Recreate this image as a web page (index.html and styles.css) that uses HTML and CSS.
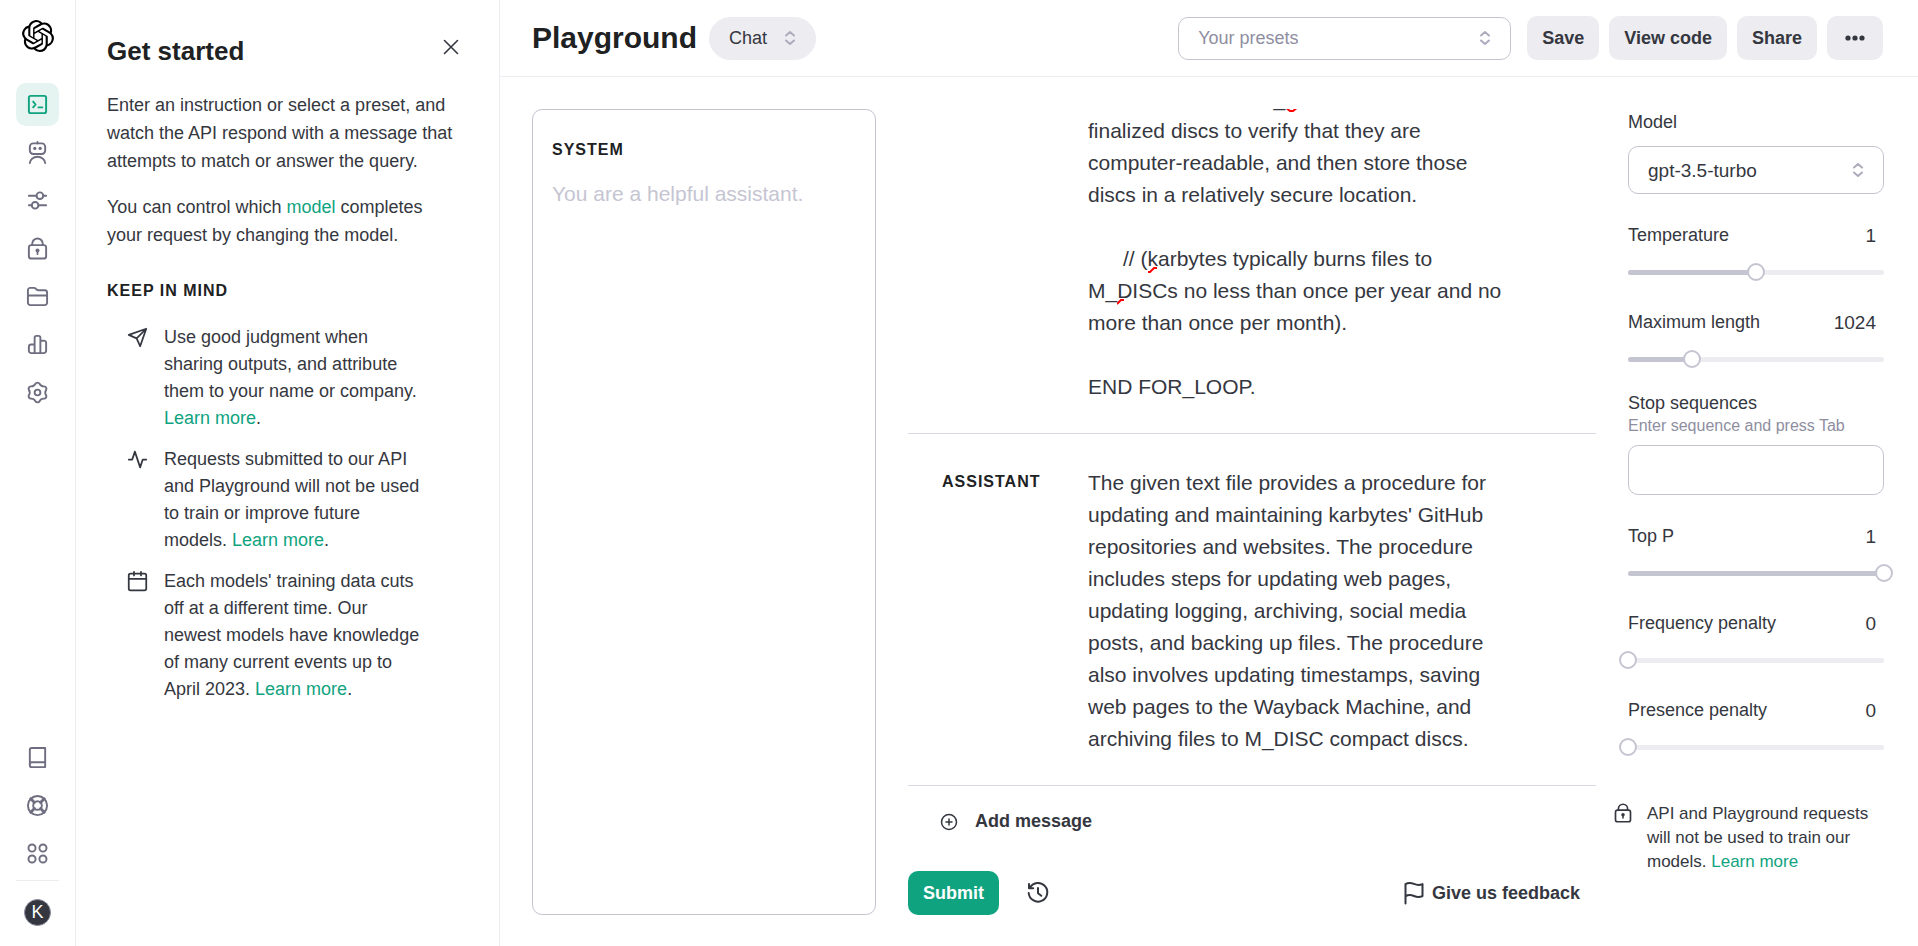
FILE: index.html
```html
<!DOCTYPE html>
<html lang="en">
<head>
<meta charset="utf-8">
<meta name="viewport" content="width=device-width, initial-scale=1">
<title>Playground</title>
<link rel="stylesheet" href="styles.css">
</head>
<body>
<svg class="defs" aria-hidden="true">
  <symbol id="chevrons" viewBox="0 0 12 16">
    <path d="M2 5.500 6 2l4 3.500M2 10.500 6 14l4-3.500" fill="none" stroke="#acacbe" stroke-width="2" stroke-linecap="round" stroke-linejoin="round"/>
  </symbol>
  <symbol id="lock" viewBox="0 0 24 24">
    <g fill="none" stroke="currentColor" stroke-width="2"><rect x="3" y="8.500" width="18" height="14" rx="2.500"/><path d="M6.500 8.500V7a5.500 5.500 0 0 1 11 0v1.500"/></g>
    <circle cx="12" cy="14" r="2.100" fill="currentColor" stroke="none"/><path d="M12 14v4" stroke="currentColor" stroke-width="1.800" stroke-linecap="round"/>
  </symbol>
</svg>
<div class="app">
  <nav class="rail" aria-label="Main">
    <a class="logo" href="#" aria-label="Home">
      <svg width="32" height="32" viewBox="0 0 24 24"><path d="M22.2819 9.8211a5.9847 5.9847 0 0 0-.5157-4.9108 6.0462 6.0462 0 0 0-6.5098-2.9A6.0651 6.0651 0 0 0 4.9807 4.1818a5.9847 5.9847 0 0 0-3.9977 2.9 6.0462 6.0462 0 0 0 .7427 7.0966 5.98 5.98 0 0 0 .511 4.9107 6.051 6.051 0 0 0 6.5146 2.9001A5.9847 5.9847 0 0 0 13.2599 24a6.0557 6.0557 0 0 0 5.7718-4.2058 5.9894 5.9894 0 0 0 3.9977-2.9001 6.0557 6.0557 0 0 0-.7475-7.0729zm-9.022 12.6081a4.4755 4.4755 0 0 1-2.8764-1.0408l.1419-.0804 4.7783-2.7582a.7948.7948 0 0 0 .3927-.6813v-6.7369l2.02 1.1686a.071.071 0 0 1 .038.052v5.5826a4.504 4.504 0 0 1-4.4945 4.4944zm-9.6607-4.1254a4.4708 4.4708 0 0 1-.5346-3.0137l.142.0852 4.783 2.7582a.7712.7712 0 0 0 .7806 0l5.8428-3.3685v2.3324a.0804.0804 0 0 1-.0332.0615L9.74 19.9502a4.4992 4.4992 0 0 1-6.1408-1.6464zM2.3408 7.8956a4.485 4.485 0 0 1 2.3655-1.9728V11.6a.7664.7664 0 0 0 .3879.6765l5.8144 3.3543-2.0201 1.1685a.0757.0757 0 0 1-.071 0l-4.8303-2.7865A4.504 4.504 0 0 1 2.3408 7.872zm16.5963 3.8558L13.1038 8.364 15.1192 7.2a.0757.0757 0 0 1 .071 0l4.8303 2.7913a4.4944 4.4944 0 0 1-.6765 8.1042v-5.6772a.79.79 0 0 0-.407-.667zm2.0107-3.0231l-.142-.0852-4.7735-2.7818a.7759.7759 0 0 0-.7854 0L9.409 9.2297V6.8974a.0662.0662 0 0 1 .0284-.0615l4.8303-2.7866a4.4992 4.4992 0 0 1 6.6802 4.66zM8.3065 12.863l-2.02-1.1638a.0804.0804 0 0 1-.038-.0567V6.0742a4.4992 4.4992 0 0 1 7.3757-3.4537l-.142.0805L8.704 5.459a.7948.7948 0 0 0-.3927.6813zm1.0976-2.3654l2.602-1.4998 2.6069 1.4998v2.9994l-2.5974 1.4997-2.6067-1.4997Z"/></svg>
    </a>
    <div class="rail-group">
      <a class="rail-item active" href="#" aria-label="Playground"><svg viewBox="0 0 24 24"><rect x="3" y="3" width="18" height="18" rx="2"/><path d="m7.500 9 2.500 3-2.500 3M13 15h4"/></svg></a>
      <a class="rail-item" href="#" aria-label="Assistants"><svg viewBox="0 0 24 24"><rect x="4" y="2.500" width="16" height="11" rx="3.500"/><path d="M12 1v1.500M4 23a8 6.500 0 0 1 16 0"/><g class="solid"><circle cx="9.200" cy="7.800" r="1.700"/><circle cx="14.800" cy="7.800" r="1.700"/></g></svg></a>
      <a class="rail-item" href="#" aria-label="Fine-tuning"><svg viewBox="0 0 24 24"><path d="M3 7h8M18 7h3M3 17h3M13 17h8"/><circle cx="14.500" cy="7" r="3.500"/><circle cx="9.500" cy="17" r="3.500"/></svg></a>
      <a class="rail-item" href="#" aria-label="API keys"><svg viewBox="0 0 24 24"><use href="#lock"/></svg></a>
      <a class="rail-item" href="#" aria-label="Files"><svg viewBox="0 0 24 24"><path d="M2 18.500v-13A2.500 2.500 0 0 1 4.500 3h3.700c1 0 1.600.4 2.200 1.100.6.800 1.200 1.400 2.300 1.400h6.800A2.500 2.500 0 0 1 22 8v10.500a2.500 2.500 0 0 1-2.500 2.500h-15A2.500 2.500 0 0 1 2 18.500zM2 11h20"/></svg></a>
      <a class="rail-item" href="#" aria-label="Usage"><svg viewBox="0 0 24 24"><path d="M9 21V5a2 2 0 0 1 2-2h2a2 2 0 0 1 2 2v16M9 12H5.500A2.500 2.500 0 0 0 3 14.500v4A2.500 2.500 0 0 0 5.500 21h13a2.500 2.500 0 0 0 2.500-2.500v-9A2.500 2.500 0 0 0 18.500 8H15"/></svg></a>
      <a class="rail-item" href="#" aria-label="Settings"><svg viewBox="0 0 24 24"><path d="M9.900 2.900A2.400 2.400 0 0 1 14.100 2.900Q15.600 5.800 18.830 5.630A2.400 2.400 0 0 1 20.930 9.270Q19.200 12 20.930 14.730A2.400 2.400 0 0 1 18.830 18.370Q15.600 18.200 14.100 21.100A2.400 2.400 0 0 1 9.900 21.100Q8.400 18.200 5.170 18.370A2.400 2.400 0 0 1 3.070 14.730Q4.800 12 3.070 9.270A2.400 2.400 0 0 1 5.170 5.630Q8.400 5.800 9.900 2.900z"/><circle cx="12" cy="12" r="3"/></svg></a>
    </div>
    <div class="rail-group rail-bottom">
      <a class="rail-item" href="#" aria-label="Documentation"><svg viewBox="0 0 24 24"><path d="M20 17H6a2 2 0 0 0-2 2V4a2 2 0 0 1 2-2h14v20H6a2 2 0 0 1-2-2v-1"/></svg></a>
      <a class="rail-item" href="#" aria-label="Help"><svg viewBox="0 0 24 24"><circle cx="12" cy="12" r="10"/><circle cx="12" cy="12" r="4.500"/><path d="m5 5 3.800 3.800M19 5l-3.800 3.800M5 19l3.800-3.800M19 19l-3.800-3.800" stroke-width="3"/></svg></a>
      <a class="rail-item" href="#" aria-label="All products"><svg viewBox="0 0 24 24"><circle cx="6.300" cy="6.300" r="3.700"/><circle cx="17.700" cy="6.300" r="3.700"/><circle cx="6.300" cy="17.700" r="3.700"/><circle cx="17.700" cy="17.700" r="3.700"/></svg></a>
    </div>
    <div class="account"><button class="avatar" type="button" aria-label="Account">K</button></div>
  </nav>

  <aside class="intro">
    <div class="intro-head">
      <h2>Get started</h2>
      <button class="close" type="button" aria-label="Close"><svg width="16" height="16" viewBox="0 0 16 16"><path d="m1.500 1.500 13 13m0-13-13 13" stroke="currentColor" stroke-width="1.600" stroke-linecap="round"/></svg></button>
    </div>
    <p>Enter an instruction or select a preset, and watch the API respond with a message that attempts to match or answer the query.</p>
    <p>You can control which <a href="#">model</a> completes your request by changing the model.</p>
    <h3 class="caps">KEEP IN MIND</h3>
    <ul class="tips">
      <li><svg viewBox="0 0 24 24"><path d="M22 2 2 9l9 4 4 9zM22 2 11 13"/></svg><span>Use good judgment when sharing outputs, and attribute them to your name or company. <a href="#">Learn more</a>.</span></li>
      <li><svg viewBox="0 0 24 24"><path d="M22 12h-4l-3 9L9 3l-3 9H2"/></svg><span>Requests submitted to our API and Playground will not be used to train or improve future models. <a href="#">Learn more</a>.</span></li>
      <li><svg viewBox="0 0 24 24"><rect x="2" y="3" width="20" height="19" rx="2"/><path d="M8 1v4M16 1v4M2 9h20"/></svg><span>Each models' training data cuts off at a different time. Our newest models have knowledge of many current events up to April 2023. <a href="#">Learn more</a>.</span></li>
    </ul>
  </aside>

  <main class="main">
    <header class="topbar">
      <h1>Playground</h1>
      <div class="select-box mode">
        <select aria-label="Mode"><option>Chat</option></select>
        <svg width="12" height="16"><use href="#chevrons"/></svg>
      </div>
      <div class="actions">
        <div class="select-box presets">
          <select aria-label="Presets"><option>Your presets</option></select>
          <svg width="12" height="16"><use href="#chevrons"/></svg>
        </div>
        <button class="btn" type="button">Save</button>
        <button class="btn" type="button">View code</button>
        <button class="btn" type="button">Share</button>
        <button class="btn more" type="button" aria-label="More"><svg width="20" height="8" viewBox="0 0 20 8" fill="currentColor"><circle cx="3" cy="4" r="2.600"/><circle cx="10" cy="4" r="2.600"/><circle cx="17" cy="4" r="2.600"/></svg></button>
      </div>
    </header>

    <div class="workspace">
      <section class="system">
        <label class="caps" for="system">SYSTEM</label>
        <textarea id="system" placeholder="You are a helpful assistant."></textarea>
      </section>

      <section class="chat">
        <div class="thread">
          <article class="message">
            <div class="role caps"></div>
            <div class="text">Insert each of the M_<span class="flag">D<svg width="14" height="6"><path d="m0 0 5 4h3l5-4"/></svg></span>ISCs,
finalized discs to verify that they are
computer-readable, and then store those
discs in a relatively secure location.

      // (<span class="flag">k<svg width="9" height="6"><path d="M0 5h2l4-4h3"/></svg></span>arbytes typically burns files to
M_<span class="flag">D<svg width="7" height="6"><path d="m0 5 4-4h3"/></svg></span>ISCs no less than once per year and no
more than once per month).

END FOR_LOOP.</div>
          </article>
          <article class="message">
            <div class="role caps">ASSISTANT</div>
            <div class="text">The given text file provides a procedure for
updating and maintaining karbytes' GitHub
repositories and websites. The procedure
includes steps for updating web pages,
updating logging, archiving, social media
posts, and backing up files. The procedure
also involves updating timestamps, saving
web pages to the Wayback Machine, and
archiving files to M_DISC compact discs.</div>
          </article>
          <button class="add" type="button"><svg width="18" height="18" viewBox="0 0 18 18"><circle cx="9" cy="9" r="7.500"/><path d="M9 6v6M6 9h6"/></svg>Add message</button>
        </div>
        <footer class="chat-foot">
          <button class="btn submit" type="button">Submit</button>
          <button class="plain history" type="button" aria-label="History"><svg width="24" height="24" viewBox="0 0 24 24"><path d="M4 6.500A9.300 9.300 0 1 1 2.700 12M3 3v4.200h4.200M12 7v5.300l3.300 2.500"/></svg></button>
          <button class="plain feedback" type="button"><svg width="20" height="24" viewBox="0 0 20 24"><path d="M1.500 22.500V3.200c3-2 6-1.400 8.500-.3 2.900 1.300 6 1.300 8.500.2v12c-2.500 1.200-5.600 1.200-8.500-.1-2.500-1-5.500-1.600-8.500.3"/></svg>Give us feedback</button>
        </footer>
      </section>

      <aside class="params">
        <label for="model">Model</label>
        <div class="select-box model">
          <select id="model"><option>gpt-3.5-turbo</option></select>
          <svg width="12" height="16"><use href="#chevrons"/></svg>
        </div>
        <div class="param">
          <div class="param-head"><label for="temp">Temperature</label><input type="text" value="1" aria-label="Temperature value"></div>
          <div class="slider"><div class="track"><div class="fill" style="width:50%"></div></div><input id="temp" type="range" min="0" max="2" step="0.01" value="1"></div>
        </div>
        <div class="param">
          <div class="param-head"><label for="len">Maximum length</label><input type="text" value="1024" aria-label="Maximum length value"></div>
          <div class="slider"><div class="track"><div class="fill" style="width:25%"></div></div><input id="len" type="range" min="0" max="4096" value="1024"></div>
        </div>
        <div class="stop">
          <label for="stop">Stop sequences</label>
          <span class="hint">Enter sequence and press Tab</span>
          <input id="stop" type="text">
        </div>
        <div class="param">
          <div class="param-head"><label for="topp">Top P</label><input type="text" value="1" aria-label="Top P value"></div>
          <div class="slider"><div class="track"><div class="fill" style="width:100%"></div></div><input id="topp" type="range" min="0" max="1" step="0.01" value="1"></div>
        </div>
        <div class="param">
          <div class="param-head"><label for="freq">Frequency penalty</label><input type="text" value="0" aria-label="Frequency penalty value"></div>
          <div class="slider"><div class="track"><div class="fill" style="width:0%"></div></div><input id="freq" type="range" min="0" max="2" step="0.01" value="0"></div>
        </div>
        <div class="param">
          <div class="param-head"><label for="pres">Presence penalty</label><input type="text" value="0" aria-label="Presence penalty value"></div>
          <div class="slider"><div class="track"><div class="fill" style="width:0%"></div></div><input id="pres" type="range" min="0" max="2" step="0.01" value="0"></div>
        </div>
        <div class="notice">
          <svg width="20" height="20" viewBox="0 0 24 24"><use href="#lock"/></svg>
          <p>API and Playground requests will not be used to train our models. <a href="#">Learn more</a></p>
        </div>
      </aside>
    </div>
  </main>
</div>
</body>
</html>
```
FILE: styles.css
```css
:root {
  --text: #353740;
  --strong: #202123;
  --muted: #6e6e80;
  --line: #ececf1;
  --border: #c5c5d2;
  --green: #10a37f;
}

* { box-sizing: border-box; }

body {
  margin: 0;
  color: var(--text);
  background: #fff;
  font: 18px/27px "Liberation Sans", Arial, sans-serif;
}

h1, h2, h3, p, ul { margin: 0; padding: 0; }
h1, h2, h3 { color: var(--strong); }
a { color: var(--green); text-decoration: none; }
button, input, select, textarea { font: inherit; color: inherit; margin: 0; }
button { border: 0; padding: 0; background: none; cursor: pointer; }
svg { display: block; flex: none; }
.defs { display: none; }

.caps {
  color: var(--strong);
  font-size: 16px;
  font-weight: 700;
  letter-spacing: 1px;
}

.app { display: flex; height: 100vh; }

/* Icon rail */
.rail {
  display: flex;
  flex: none;
  flex-direction: column;
  width: 76px;
  padding: 20px 16px;
  border-right: 1px solid var(--line);
}
.logo { align-self: center; margin-bottom: 31px; color: #000; }
.rail-group { display: flex; flex-direction: column; gap: 5px; }
.rail-item {
  display: grid;
  place-items: center;
  height: 43px;
  border-radius: 10px;
  color: var(--muted);
}
.rail-item > svg {
  width: 23px;
  height: 23px;
  overflow: visible;
  fill: none;
  stroke: currentColor;
  stroke-width: 2;
  stroke-linecap: round;
  stroke-linejoin: round;
}
.rail-item .solid { fill: currentColor; stroke: none; }
.rail-item.active { color: var(--green); background: #e5f3f1; }
.rail-bottom { margin-top: auto; }
.account {
  display: flex;
  justify-content: center;
  margin-top: 5px;
  padding-top: 18px;
  border-top: 1px solid var(--line);
}
.avatar {
  width: 27px;
  height: 27px;
  border: 1px solid #8e8ea0;
  border-radius: 50%;
  background: var(--text);
  color: #fff;
  line-height: 25px;
}

/* Intro panel */
.intro {
  flex: none;
  width: 424px;
  padding: 35px 36px 32px 31px;
  border-right: 1px solid var(--line);
}
.intro-head { display: flex; justify-content: space-between; margin-bottom: 24px; }
.intro-head h2 { font-size: 26px; line-height: 32px; }
.close { align-self: flex-start; padding: 4px; }
.intro p { max-width: 350px; line-height: 28px; }
.intro p + p { margin-top: 18px; }
.intro h3 { margin: 28px 0 20px; }
.tips { display: grid; gap: 14px; padding: 0 20px; list-style: none; }
.tips li { display: flex; gap: 16px; }
.tips span { width: 260px; flex: none; }
.tips svg {
  width: 21px;
  height: 21px;
  margin-top: 3px;
  fill: none;
  stroke: currentColor;
  stroke-width: 2;
  stroke-linecap: round;
  stroke-linejoin: round;
}

/* Header */
.main { display: flex; flex: 1; flex-direction: column; min-width: 0; }
.topbar {
  display: flex;
  align-items: center;
  flex: none;
  height: 77px;
  padding: 0 35px 0 32px;
  border-bottom: 1px solid var(--line);
}
.topbar h1 { font-size: 30px; line-height: 36px; }
.actions { display: flex; align-items: center; gap: 10px; margin-left: auto; }
.btn {
  height: 44px;
  padding: 0 15px;
  border-radius: 10px;
  background: var(--line);
  font-weight: 700;
}
.more { padding: 0 18px; }

.select-box { display: grid; align-items: center; }
.select-box > * { grid-area: 1 / 1; }
.select-box > svg { justify-self: end; margin-right: 20px; pointer-events: none; }
.select-box select {
  width: 100%;
  height: 43px;
  padding: 0 40px 0 19px;
  appearance: none;
  border: 1px solid var(--border);
  border-radius: 10px;
  background: #fff;
}
.mode { width: 107px; margin-left: 12px; }
.mode select { border-color: var(--line); border-radius: 22px; background: var(--line); }
.presets { width: 333px; margin-right: 6px; color: #8e8ea0; }
.model { margin-top: 10px; }
.model select { height: 48px; font-size: 19px; }

/* Workspace */
.workspace {
  display: grid;
  flex: 1;
  grid-template-columns: 1fr 2fr 256px;
  gap: 32px;
  min-height: 0;
  padding: 32px 34px 31px 32px;
}
.system {
  display: flex;
  flex-direction: column;
  gap: 15px;
  padding: 26px 20px 20px 19px;
  border: 1px solid var(--border);
  border-radius: 10px;
}
.system textarea {
  flex: 1;
  padding: 0;
  border: 0;
  outline: 0;
  background: none;
  resize: none;
  font-size: 21px;
  line-height: 32px;
}
.system textarea::placeholder { color: var(--border); }

.chat { display: flex; flex-direction: column; min-width: 0; min-height: 0; }
.thread {
  display: flex;
  flex: 1;
  flex-direction: column;
  justify-content: flex-end;
  min-height: 0;
  overflow: hidden;
}
.message {
  display: flex;
  flex: none;
  padding: 33px 34px 30px;
  border-bottom: 1px solid #d9d9e3;
}
.role { flex: none; width: 146px; line-height: 30px; }
.text { font-size: 21px; line-height: 32px; white-space: pre-wrap; }
.flag { position: relative; }
.flag svg {
  position: absolute;
  top: 20px;
  left: 0;
  fill: none;
  stroke: #f00;
  stroke-width: 2;
}
.add {
  display: flex;
  align-items: center;
  flex: none;
  gap: 17px;
  height: 71px;
  padding: 0 32px;
  font-weight: 700;
}
.add svg, .plain svg {
  fill: none;
  stroke: currentColor;
  stroke-width: 2;
  stroke-linecap: round;
  stroke-linejoin: round;
}
.add svg { stroke-width: 1.5; }
.chat-foot { display: flex; align-items: center; flex: none; margin-top: 14px; }
.submit { background: var(--green); color: #fff; }
.plain { display: flex; align-items: center; gap: 8px; height: 44px; font-weight: 700; }
.history { margin-left: 27px; }
.feedback { margin-left: auto; margin-right: 16px; }

/* Parameters */
.params { display: flex; flex-direction: column; }
.param { margin-top: 28px; }
.param-head { display: flex; justify-content: space-between; margin-bottom: 14px; }
.param-head input {
  width: 72px;
  height: 27px;
  padding: 0 8px;
  border: 0;
  background: none;
  font-size: 19px;
  text-align: right;
}
.slider { display: grid; align-items: center; height: 18px; }
.slider > * { grid-area: 1 / 1; }
.track { height: 5px; border-radius: 3px; background: var(--line); overflow: hidden; }
.fill { height: 100%; background: var(--border); }
.slider input {
  z-index: 1;
  width: calc(100% + 18px);
  height: 18px;
  margin: 0 -9px;
  appearance: none;
  background: none;
}
.slider input::-webkit-slider-thumb {
  width: 18px;
  height: 18px;
  appearance: none;
  border: 2px solid var(--border);
  border-radius: 50%;
  background: #fff;
}
.stop { display: flex; flex-direction: column; margin-top: 23px; line-height: 24px; }
.hint { color: #8e8ea0; font-size: 16px; line-height: 22px; }
.stop input {
  height: 50px;
  margin-top: 8px;
  padding: 0 16px;
  border: 1px solid var(--border);
  border-radius: 10px;
}
.notice {
  display: flex;
  gap: 14px;
  margin: 46px 0 0 -15px;
  font-size: 17px;
  line-height: 24px;
}
.notice svg { margin-top: 1px; }
```
